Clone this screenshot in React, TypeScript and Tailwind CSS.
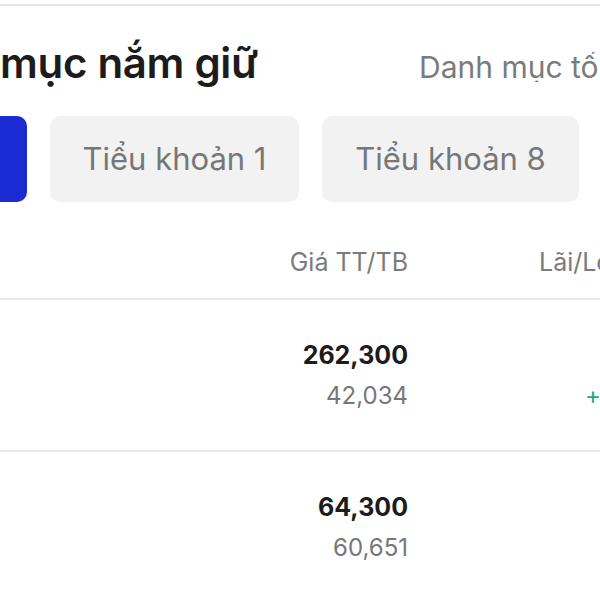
import React from 'react';

const font = { fontFamily: 'Inter, "Noto Sans", sans-serif' };

const rows = [
  { price: '262,300', avg: '42,034', pnl: '+', pnlColor: 'text-[#1ea97c]' },
  { price: '64,300', avg: '60,651', pnl: '', pnlColor: 'text-[#1ea97c]' },
];

export default function App() {
  return (
    <div className="w-[600px] h-[600px] overflow-hidden bg-white" style={font}>
      {/* top divider */}
      <div className="mt-[4px] h-[2px] bg-[#e6e6e6]" />

      {/* title */}
      <div className="flex items-baseline justify-between h-[95px] pt-[36px] whitespace-nowrap">
        <span className="text-[42px] font-semibold text-[#1c1c1c] leading-none tracking-[-0.3px]">mục nắm giữ</span>
        <span className="text-[30px] text-[#7b7b7b] leading-none -mr-[40px] w-[221px] overflow-hidden">Danh mục tổng</span>
      </div>

      {/* account tabs */}
      <div className="flex gap-[23px] mt-[15px] whitespace-nowrap">
        <div className="-ml-[93px] w-[120px] h-[86px] rounded-[10px] bg-[#1b2bd3] shrink-0" />
        <div className="w-[249px] h-[86px] rounded-[10px] bg-[#f2f2f2] flex items-center justify-center text-[31px] text-[#777] shrink-0">
          Tiểu khoản 1
        </div>
        <div className="w-[257px] h-[86px] rounded-[10px] bg-[#f2f2f2] flex items-center justify-center text-[31px] text-[#777] shrink-0">
          Tiểu khoản 8
        </div>
      </div>

      {/* column header */}
      <div className="flex items-start h-[96px] pt-[45px] text-[25px] leading-[30px] text-[#7b7b7b] whitespace-nowrap">
        <div className="w-[408px] shrink-0 text-right">Giá TT/TB</div>
        <div className="pl-[131px] shrink-0">Lãi/Lỗ</div>
      </div>
      <div className="h-[2px] bg-[#e8e8e8]" />

      {rows.map((r, i) => (
        <div key={i}>
          <div className="flex h-[150px] pt-[40px] whitespace-nowrap">
            <div className="w-[408px] shrink-0 flex flex-col items-end">
              <span className="text-[25px] font-bold text-[#1c1c1c] leading-[30px]">{r.price}</span>
              <span className="text-[24px] text-[#777] leading-[30px] mt-[11px]">{r.avg}</span>
            </div>
            <div className="pl-[177px] pt-[41px] shrink-0">
              <span className={`text-[24px] leading-[30px] ${r.pnlColor}`}>{r.pnl}</span>
            </div>
          </div>
          <div className="h-[2px] bg-[#e8e8e8]" />
        </div>
      ))}
    </div>
  );
}
